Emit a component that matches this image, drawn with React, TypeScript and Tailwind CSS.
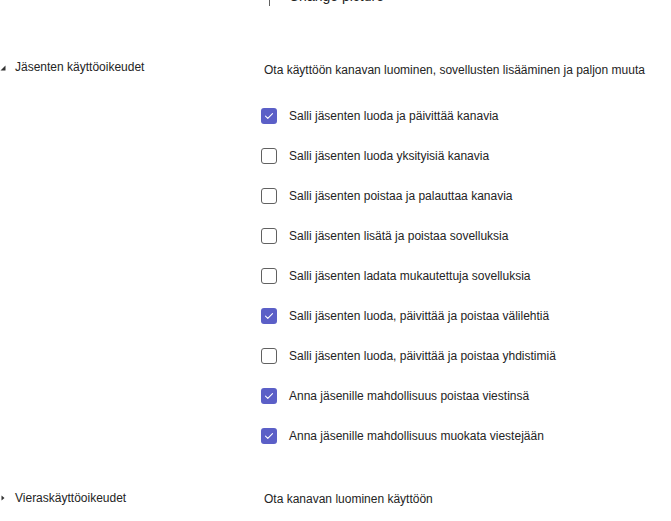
const memberPerms = [
    { label: "Salli jäsenten luoda ja päivittää kanavia", checked: true },
    { label: "Salli jäsenten luoda yksityisiä kanavia", checked: false },
    { label: "Salli jäsenten poistaa ja palauttaa kanavia", checked: false },
    { label: "Salli jäsenten lisätä ja poistaa sovelluksia", checked: false },
    { label: "Salli jäsenten ladata mukautettuja sovelluksia", checked: false },
    { label: "Salli jäsenten luoda, päivittää ja poistaa välilehtiä", checked: true },
    { label: "Salli jäsenten luoda, päivittää ja poistaa yhdistimiä", checked: false },
    { label: "Anna jäsenille mahdollisuus poistaa viestinsä", checked: true },
    { label: "Anna jäsenille mahdollisuus muokata viestejään", checked: true },
];

const Checkbox = ({ checked }: { checked: boolean }) =>
    checked ? (
        <span className="w-4 h-4 rounded-[3px] bg-[#5b5fc7] flex items-center justify-center shrink-0">
            <svg width="10" height="8" viewBox="0 0 10 8" fill="none">
                <path d="M1.5 4.2 L3.8 6.3 L8.5 1.6" stroke="white" strokeWidth="1.1" strokeLinecap="round" strokeLinejoin="round" />
            </svg>
        </span>
    ) : (
        <span className="w-4 h-4 rounded-[3px] border border-[#616161] bg-white shrink-0" />
    );

const App = () => {
    return (
        <div className="w-[671px] h-[521px] overflow-hidden bg-white text-[12px] text-[#242424] font-['Liberation_Sans',Arial,sans-serif]">
            {/* tail of the picture section above */}
            <div className="flex h-[6px] pl-[269px] overflow-hidden">
                <span className="w-px h-[7px] bg-[#616161]" />
                <span className="ml-[19px] -mt-[12px] text-[14px] leading-[16px]">Change picture</span>
            </div>

            <section className="flex mt-[53px]">
                <div className="w-[261px] flex items-start shrink-0">
                    <span className="w-[15px] h-[16px] flex items-center">
                        <svg width="6" height="6" viewBox="0 0 6 6" className="mt-[1px]">
                            <path d="M5.5 0.5 L5.5 5.5 L0.5 5.5 Z" fill="#333" />
                        </svg>
                    </span>
                    <span className="leading-[16px]">Jäsenten käyttöoikeudet</span>
                </div>
                <div className="flex flex-col">
                    <p className="leading-[16px] mt-[3px] ml-[3px]">
                        Ota käyttöön kanavan luominen, sovellusten lisääminen ja paljon muuta
                    </p>
                    <ul className="mt-[30px] flex flex-col gap-[24px]">
                        {memberPerms.map((p) => (
                            <li key={p.label} className="flex items-center h-4">
                                <Checkbox checked={p.checked} />
                                <span className="ml-[12px] leading-[16px]">{p.label}</span>
                            </li>
                        ))}
                    </ul>
                </div>
            </section>

            <section className="flex mt-[46px]">
                <div className="w-[261px] flex items-start shrink-0">
                    <span className="w-[15px] h-[16px] flex items-center">
                        <svg width="6" height="6" viewBox="0 0 6 6">
                            <path d="M1.5 0.5 L4.5 3 L1.5 5.5 Z" fill="#333" />
                        </svg>
                    </span>
                    <span className="leading-[16px]">Vieraskäyttöoikeudet</span>
                </div>
                <p className="leading-[16px] mt-[1px] ml-[3px]">Ota kanavan luominen käyttöön</p>
            </section>
        </div>
    );
};

export default App;
